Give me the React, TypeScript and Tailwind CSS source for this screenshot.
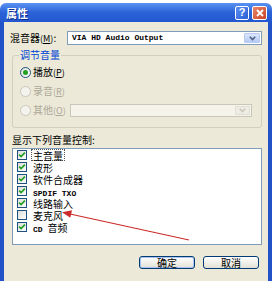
import React from 'react'

const cjk = "font-['Noto_Sans_CJK_SC',sans-serif]"
const mono = "font-['Liberation_Mono','Noto_Sans_CJK_SC',monospace]"

function Chevron({ color = '#4d6185' }: { color?: string }) {
    return (
        <svg width="7" height="5" viewBox="0 0 7 5">
            <path d="M0.8 0.8 L3.5 3.5 L6.2 0.8" stroke={color} strokeWidth="1.6" fill="none" />
        </svg>
    )
}

function Radio({ checked, disabled }: { checked?: boolean; disabled?: boolean }) {
    return (
        <span
            className={
                disabled
                    ? 'w-[11px] h-[11px] shrink-0 rounded-full border border-[#cac8bb] bg-[#f4f3ee] flex items-center justify-center'
                    : 'w-[11px] h-[11px] shrink-0 rounded-full border border-[#1c5180] bg-linear-to-br from-[#dcdcd7] to-white flex items-center justify-center'
            }
        >
            {checked && <span className="w-[5px] h-[5px] rounded-full bg-[#21a121]" />}
        </span>
    )
}

function Check({ checked }: { checked: boolean }) {
    return (
        <span className="w-[10px] h-[10px] border border-[#1c5180] bg-linear-to-br from-[#dcdcd7] to-white flex items-center justify-center shrink-0">
            {checked && (
                <svg width="8" height="8" viewBox="0 0 8 8">
                    <path d="M1.2 3.6 L3.1 5.6 L6.9 1.6" stroke="#21a121" strokeWidth="1.7" fill="none" />
                </svg>
            )}
        </span>
    )
}

// mnemonic letter like (M)
function Key({ k }: { k: string }) {
    return (
        <span className="text-[9px]">
            (<span className="underline">{k}</span>)
        </span>
    )
}

const items = [
    { label: '主音量', checked: true, focus: true },
    { label: '波形', checked: true },
    { label: '软件合成器', checked: true },
    { label: 'SPDIF TXO', checked: true, latin: true },
    { label: '线路输入', checked: true },
    { label: '麦克风', checked: false },
    { label: 'CD 音频', checked: true, cd: true },
]

export default function App() {
    return (
        <div className={`relative w-[272px] h-[281px] bg-white pt-[3px] flex flex-col overflow-hidden text-[10px] leading-[12px] text-black ${cjk}`}>
            {/* title bar */}
            <div className="h-[19px] rounded-t-[6px] bg-linear-to-b from-[#5a93f2] via-[#2a62d8] to-[#2457cf] flex items-center pl-[6px] pr-[5px]">
                <span className="text-white font-bold text-[11px] [text-shadow:1px_1px_0_#0a2a8a]">属性</span>
                <div className="ml-auto flex items-center gap-[3px]">
                    <div className="w-[14px] h-[14px] rounded-[2px] border border-white bg-linear-to-br from-[#5b8df0] to-[#2a5fd6] flex items-center justify-center text-white font-bold text-[11px] leading-none font-['Liberation_Sans',sans-serif]">
                        ?
                    </div>
                    <div className="w-[15px] h-[14px] rounded-[2px] border border-white bg-linear-to-br from-[#e9876a] to-[#c9401f] flex items-center justify-center">
                        <svg width="8" height="8" viewBox="0 0 8 8">
                            <path d="M1 1 L7 7 M7 1 L1 7" stroke="white" strokeWidth="1.8" />
                        </svg>
                    </div>
                </div>
            </div>

            {/* body */}
            <div className="flex-1 bg-[#ece9d8] border-l-4 border-r-4 border-[#2351c7] flex flex-col">
                <div className="mt-[9px] ml-[6px] flex items-center">
                    <span className="w-[57px] whitespace-nowrap">
                        混音器<Key k="M" />:
                    </span>
                    <div className="w-[195px] h-[14px] border border-[#7f9db9] bg-white flex items-center">
                        <span className={`pl-[4px] text-[8px] font-bold ${mono}`}>VIA HD Audio Output</span>
                        <div className="ml-auto mr-[1px] w-[16px] h-[10px] rounded-[1px] border border-[#b9cbf3] bg-linear-to-b from-[#dbe6fd] to-[#b6c9f4] flex items-center justify-center">
                            <Chevron />
                        </div>
                    </div>
                </div>

                <fieldset className="mt-[4px] ml-[8px] w-[250px] border border-[#d0d0bf] rounded-[3px] pl-[6px] pr-[9px] pt-[2px] pb-[7px]">
                    <legend className="px-[1px] text-[#0046d5] leading-[12px]">调节音量</legend>
                    <div className="h-[19px] flex items-center gap-[2px] ml-[1px] whitespace-nowrap">
                        <Radio checked />
                        <span>
                            播放<Key k="P" />
                        </span>
                    </div>
                    <div className="h-[19px] flex items-center gap-[2px] ml-[1px] text-[#aca899] whitespace-nowrap">
                        <Radio disabled />
                        <span>
                            录音<Key k="R" />
                        </span>
                    </div>
                    <div className="h-[19px] flex items-center gap-[2px] ml-[1px] text-[#aca899] whitespace-nowrap">
                        <Radio disabled />
                        <span className="shrink-0">
                            其他<Key k="O" />
                        </span>
                        <div className="ml-auto w-[182px] shrink-0 h-[13px] border border-[#c9c7ba] bg-[#f5f4ea] flex items-center justify-end pr-[1px]">
                            <div className="w-[15px] h-[9px] rounded-[1px] bg-[#eeede5] border border-[#e0dfd6] flex items-center justify-center">
                                <Chevron color="#c9c7ba" />
                            </div>
                        </div>
                    </div>
                </fieldset>

                <div className="mt-[6px] ml-[8px]">显示下列音量控制:</div>

                <div className="mt-[2px] ml-[8px] w-[250px] h-[97px] border border-[#7f9db9] bg-white flex flex-col pl-[4px]">
                    {items.map((it) => (
                        <div key={it.label} className="h-[12px] flex items-center gap-[4px]">
                            <Check checked={it.checked} />
                            <span
                                className={
                                    it.focus
                                        ? 'inline-block h-[12px] px-[1px] border border-dotted border-[#555] leading-[11px]'
                                        : 'inline-block h-[12px] px-[1px] border border-transparent leading-[11px]'
                                }
                            >
                                {it.latin ? (
                                    <span className={`text-[8px] font-bold ${mono}`}>{it.label}</span>
                                ) : it.cd ? (
                                    <>
                                        <span className={`text-[8px] font-bold ${mono}`}>CD </span>音频
                                    </>
                                ) : (
                                    it.label
                                )}
                            </span>
                        </div>
                    ))}
                </div>

                <div className="mt-[11px] pr-[9px] flex justify-end gap-[8px]">
                    <button className="w-[56px] h-[13px] rounded-[3px] border border-[#003c74] bg-linear-to-b from-white to-[#e3e1d6] shadow-[inset_0_0_0_1px_#a9c2f1] flex items-center justify-center text-[10px] leading-none">
                        确定
                    </button>
                    <button className="w-[56px] h-[13px] rounded-[3px] border border-[#003c74] bg-linear-to-b from-white to-[#e3e1d6] flex items-center justify-center text-[10px] leading-none">
                        取消
                    </button>
                </div>
            </div>

            {/* annotation arrow */}
            <svg className="absolute inset-0 pointer-events-none" width="272" height="281" viewBox="0 0 272 281">
                <line x1="189" y1="240" x2="70" y2="214" stroke="#cc2b2b" strokeWidth="1.2" />
                <polygon points="62,212.3 72,210.3 70.3,217.8" fill="#cc2b2b" />
            </svg>
        </div>
    )
}
